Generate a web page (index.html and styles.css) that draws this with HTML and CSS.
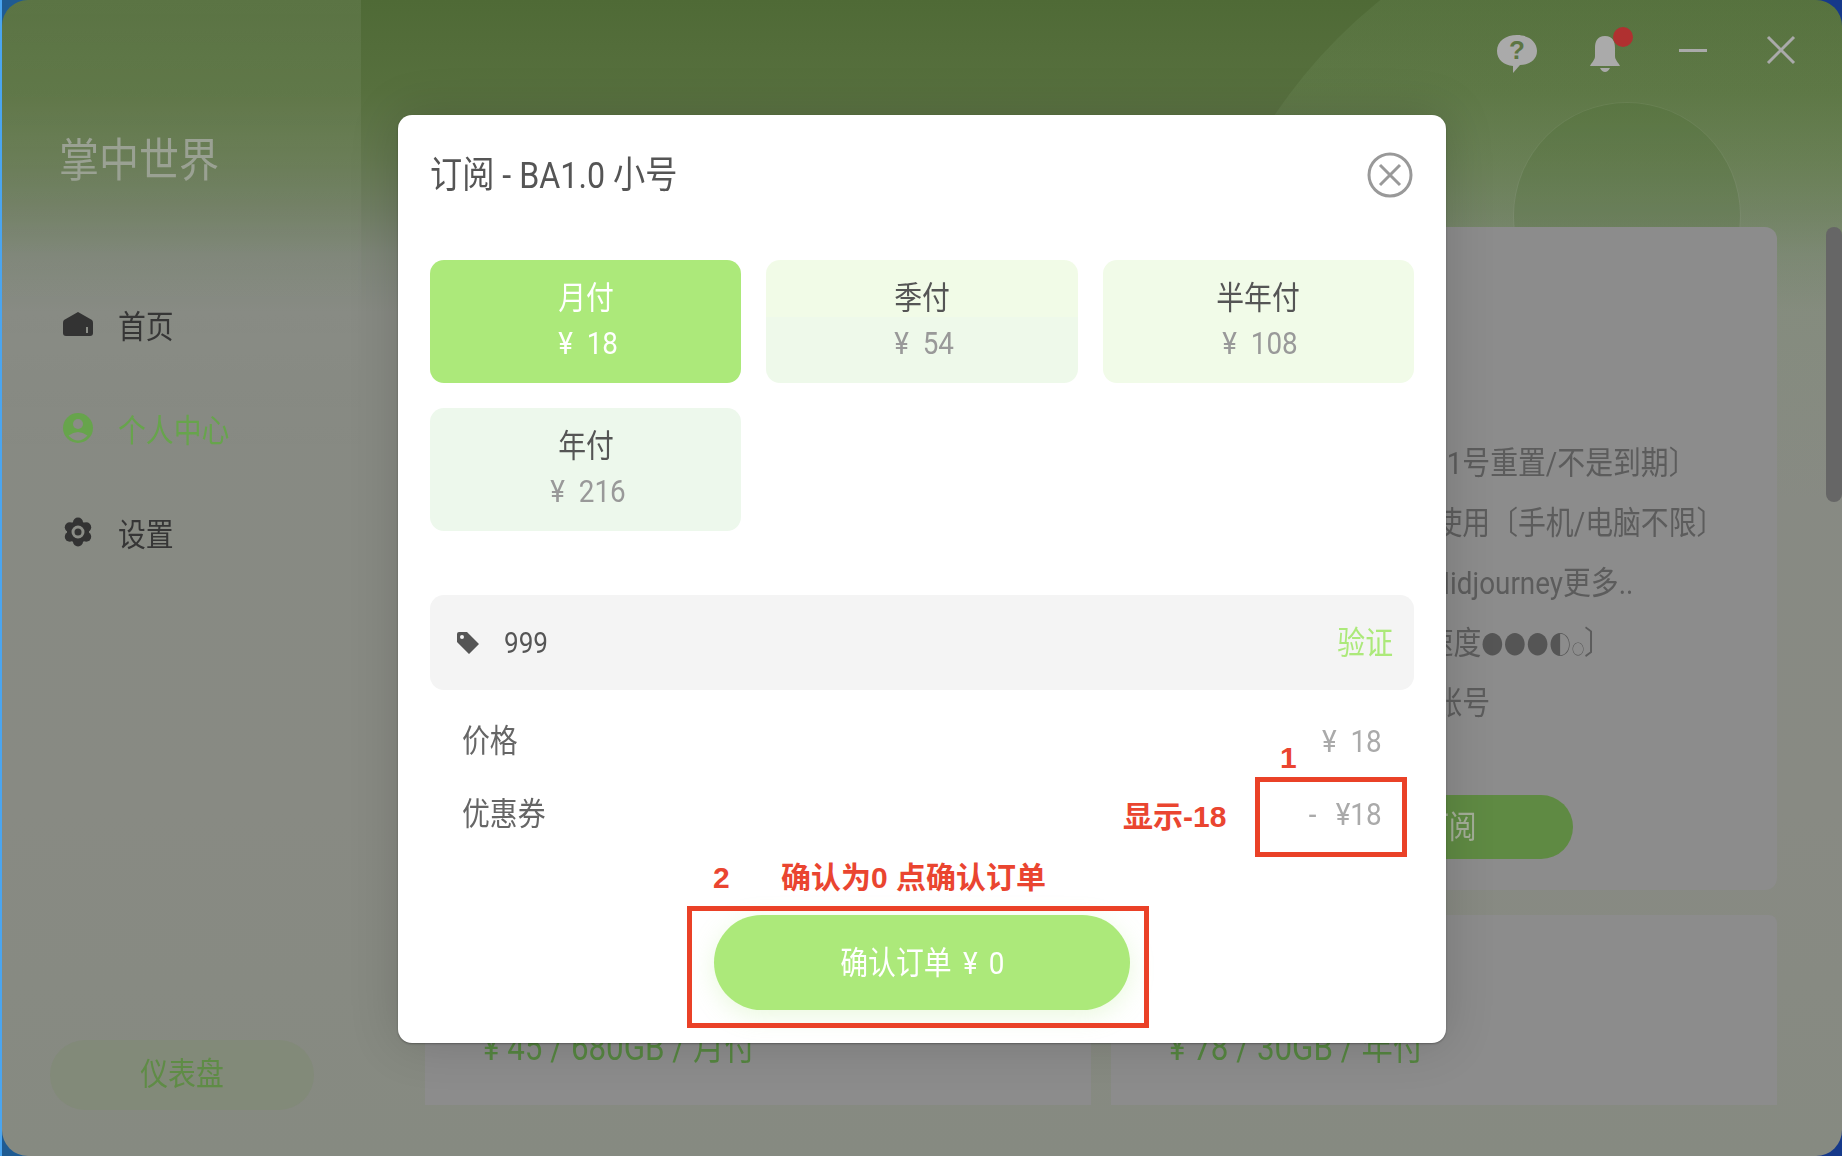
FILE: index.html
```html
<!DOCTYPE html>
<html lang="zh-CN">
<head>
<meta charset="utf-8">
<title>掌中世界</title>
<link rel="stylesheet" href="styles.css">
</head>
<body>
<div class="desk">
  <div class="window">
    <div class="deco deco-large"></div>
    <div class="deco deco-small"></div>

    <aside class="sidebar">
      <div class="logo"><span class="sq">掌中世界</span></div>
      <nav class="nav">
        <a class="nav-item">
          <svg class="nav-icon" viewBox="0 0 30 24"><path d="M15 0 29 8Q30 9 30 11V21Q30 24 27 24H3Q0 24 0 21V11Q0 9 1 8Z" fill="#333"/><rect x="23" y="15" width="2" height="6" fill="#8a8c86"/></svg>
          <span class="sq">首页</span>
        </a>
        <a class="nav-item active">
          <svg class="nav-icon" viewBox="0 0 30 30"><circle cx="15" cy="15" r="15" fill="#67a44c"/><circle cx="15" cy="11" r="5" fill="#8a8c86"/><path d="M5.5 22.5Q15 15.500 24.500 22.500 20 27.500 15 27.500T5.500 22.500Z" fill="#8a8c86"/></svg>
          <span class="sq">个人中心</span>
        </a>
        <a class="nav-item">
          <svg class="nav-icon" viewBox="0 0 30 30"><g fill="#333"><circle cx="15" cy="15" r="11"/><circle cx="15" cy="5.500" r="5"/><circle cx="15" cy="24.500" r="5"/><circle cx="6.800" cy="10.200" r="5"/><circle cx="23.200" cy="10.200" r="5"/><circle cx="6.800" cy="19.800" r="5"/><circle cx="23.200" cy="19.800" r="5"/></g><circle cx="15" cy="15" r="5" fill="none" stroke="#8a8c86" stroke-width="3"/></svg>
          <span class="sq">设置</span>
        </a>
      </nav>
      <button class="dash-btn"><span class="sq">仪表盘</span></button>
    </aside>

    <main class="main">
      <header class="toolbar">
        <span class="tool tool-low">
          <svg viewBox="0 0 42 40" width="42" height="40"><path d="M21 1C32 1 41 7 41 17 41 26 33 31 24 31L17 39 17 32C8 31 1 26 1 17 1 7 10 1 21 1Z" fill="#aaa"/><text x="21" y="25" class="help-mark">?</text></svg>
        </span>
        <span class="tool tool-low">
          <svg viewBox="0 0 32 38" width="32" height="38"><path d="M16 1C8 1 6 7 6 13V21C6 25 3 27 1 31H31C29 27 26 25 26 21V13C26 7 24 1 16 1Z" fill="#aaa"/><path d="M11 33H21Q19 37 16 37T11 33Z" fill="#aaa"/></svg>
          <i class="dot"></i>
        </span>
        <span class="tool"><i class="minus"></i></span>
        <span class="tool">
          <svg viewBox="0 0 30 30" width="30" height="30"><path d="M2 2 28 28M28 2 2 28" stroke="#aaa" stroke-width="3" fill="none"/></svg>
        </span>
      </header>

      <section class="plans">
        <article class="plan plan-tall"></article>
        <article class="plan plan-tall">
          <ul class="features">
            <li class="sq-left">每月1号重置/不是到期〕</li>
            <li class="sq-left">5台使用〔手机/电脑不限〕</li>
            <li class="sq-left">可 Midjourney更多..</li>
            <li class="sq-left">〔 速度<span class="dots">●●●◐</span><span class="dots-small">○</span>〕</li>
            <li class="sq-left">1个账号</li>
          </ul>
          <button class="buy-btn"><span class="sq">立即订阅</span></button>
        </article>
        <article class="plan plan-short"><p class="plan-price sq-left">¥ 45 / 680GB / 月付</p></article>
        <article class="plan plan-short"><p class="plan-price sq-left">¥ 78 / 30GB / 年付</p></article>
      </section>
    </main>
    <div class="scroll-thumb"></div>

    <div class="modal-layer">
      <div class="modal">
        <header class="modal-head">
          <h2 class="modal-title sq-left">订阅 - BA1.0 小号</h2>
          <svg class="modal-close" viewBox="0 0 46 46" width="46" height="46"><circle cx="23" cy="23" r="21" fill="none" stroke="#999" stroke-width="3"/><path d="M13 13 33 33M33 13 13 33" stroke="#999" stroke-width="3" fill="none"/></svg>
        </header>

        <div class="periods">
          <div class="period selected"><b class="sq">月付</b><em class="sq">¥ 18</em></div>
          <div class="period banded"><b class="sq">季付</b><em class="sq">¥ 54</em></div>
          <div class="period"><b class="sq">半年付</b><em class="sq">¥ 108</em></div>
          <div class="period cool"><b class="sq">年付</b><em class="sq">¥ 216</em></div>
        </div>

        <div class="coupon">
          <svg class="tag" viewBox="0 0 24 24" width="24" height="24"><path fill-rule="evenodd" d="M1 3Q1 1 3 1H11L23 13 13 23 1 11ZM6 4A2 2 0 1 0 6 8 2 2 0 1 0 6 4Z" fill="#555"/></svg>
          <span class="coupon-code">999</span>
          <span class="coupon-verify"><span class="sq-right">验证</span></span>
        </div>

        <div class="summary">
          <div class="sum-row"><span class="sum-label sq-left">价格</span><span class="sum-val sq-right">¥ 18</span></div>
          <div class="sum-row"><span class="sum-label sq-left">优惠券</span><span class="sum-val sum-minus sq-right">- ¥18</span></div>
        </div>

        <button class="confirm"><span class="sq">确认订单 ¥ 0</span></button>

        <div class="mark mark-box-1"></div>
        <div class="mark mark-box-2"></div>
        <span class="note note-1">1</span>
        <span class="note note-show">显示-18</span>
        <span class="note note-2">2</span>
        <span class="note note-confirm">确认为0 点确认订单</span>
      </div>
    </div>
  </div>
</div>
</body>
</html>
```
FILE: styles.css
```css
* { box-sizing: border-box; }
html, body { margin: 0; height: 100%; }
body {
  width: 1842px;
  height: 1156px;
  overflow: hidden;
  font-family: Roboto, "Noto Sans CJK SC", sans-serif;
  background: linear-gradient(90deg, #1f5b92 0, #1f5b92 50%, #16398a 50%, #16398a 100%);
}
.sq { display: inline-block; transform: scaleX(.87); transform-origin: center; white-space: nowrap; }
.sq-left { transform: scaleX(.87); transform-origin: left center; white-space: nowrap; }
.sq-right { display: inline-block; transform: scaleX(.87); transform-origin: right center; white-space: nowrap; }

.desk { height: 100%; border-left: 2px solid #4aa5f0; }
.window {
  position: relative;
  display: flex;
  height: 100%;
  overflow: hidden;
  border-radius: 26px;
  background: linear-gradient(180deg, #4f6a36 0, #57703e 8%, #647850 14%, #6f7d62 18%, #7d8577 22%, #878a83 27%, #888a83 70%, #868a81 100%);
}
.deco { position: absolute; border-radius: 50%; }
.deco-large {
  left: 1186px; top: -112px;
  width: 1024px; height: 1024px;
  background: linear-gradient(180deg, rgba(120, 150, 100, .14) 0, rgba(120, 150, 100, .26) 30%, rgba(120, 150, 100, .12) 45%, rgba(120, 150, 100, 0) 60%);
}
.deco-small {
  left: 1512px; top: 103px;
  width: 226px; height: 226px;
  background: rgba(60, 100, 40, .16);
  box-shadow: 0 0 0 1px rgba(255, 255, 255, .05);
}

.sidebar {
  position: relative;
  flex: 0 0 359px;
  display: flex;
  flex-direction: column;
  padding: 0 45px 46px 48px;
  background: linear-gradient(180deg, rgba(255, 255, 255, .07) 0, rgba(255, 255, 255, .05) 12%, rgba(255, 255, 255, .02) 24%, rgba(255, 255, 255, 0) 40%);
  filter: blur(.5px);
}
.logo {
  margin-top: 133px;
  height: 54px;
  line-height: 54px;
  font-size: 46px;
  color: #9aa193;
  margin-left: 9px;
}
.logo .sq { transform-origin: left center; }
.nav { display: flex; flex-direction: column; margin-top: 85px; margin-left: 13px; }
.nav-item {
  display: flex;
  align-items: center;
  gap: 25px;
  height: 104px;
  font-size: 32px;
  color: #363636;
}
.nav-item .sq { transform-origin: left center; }
.nav-item.active { color: #67a44c; }
.nav-icon { width: 30px; height: 30px; flex: none; }
.dash-btn {
  margin-top: auto;
  height: 70px;
  width: 264px;
  padding: 0 0 8px;
  border: 0;
  border-radius: 35px;
  font: inherit;
  font-size: 32px;
  color: #5f8c46;
  background: #828a79;
}

.main { position: relative; flex: 1; display: flex; flex-direction: column; min-width: 0; }
.toolbar { display: flex; justify-content: flex-end; align-items: center; height: 100px; padding-right: 17px; flex: none; }
.tool { position: relative; display: flex; align-items: center; justify-content: center; width: 88px; height: 100px; }
.tool-low svg { margin-top: 7px; }
.help-mark { font: bold 26px "Liberation Sans", sans-serif; fill: #5d7543; text-anchor: middle; }
.dot { position: absolute; left: 52px; top: 27px; width: 20px; height: 20px; border-radius: 50%; background: #b03030; }
.minus { width: 28px; height: 3px; background: #aaa; }

.plans {
  display: grid;
  grid-template-columns: 666px 666px;
  grid-template-rows: 663px 190px;
  gap: 25px 20px;
  padding-left: 64px;
  margin-top: 127px;
  filter: blur(.5px);
}
.plan { background: #8c8c8c; border-radius: 12px; min-width: 0; overflow: hidden; }
.plan-short { border-radius: 8px 8px 0 0; }
.features {
  list-style: none;
  margin: 206px 0 0 280px;
  padding: 0;
  font-size: 32px;
  color: #5c5c5c;
}
.features li { height: 60px; line-height: 60px; }
.dots { font-size: 25px; letter-spacing: 1px; color: #555; }
.dots-small { font-size: 14px; color: #555; }
.buy-btn {
  display: block;
  width: 304px;
  height: 64px;
  margin: 62px 0 0 158px;
  padding: 0 0 6px;
  border: 0;
  border-radius: 32px;
  background: #5f8a43;
  color: #a4ae98;
  font: inherit;
  font-size: 32px;
}
.plan-price { margin: 113px 0 0 58px; font-size: 36px; line-height: 40px; color: #558540; }

.scroll-thumb { position: absolute; right: 0; top: 227px; width: 16px; height: 275px; border-radius: 8px; background: #666; }

.modal-layer { position: absolute; inset: 0 0 0 -2px; display: flex; align-items: flex-start; justify-content: center; padding-top: 115px; padding-left: 2px; }
.modal {
  position: relative;
  width: 1048px;
  height: 928px;
  padding: 0 32px;
  border-radius: 14px;
  background: #fff;
  box-shadow: 0 0 50px rgba(0, 0, 0, .16), 0 1px 2px rgba(0, 0, 0, .3);
}
.modal-head { display: flex; align-items: center; justify-content: space-between; height: 120px; padding-right: 1px; }
.modal-title { margin: -7px 0 0; font-size: 37px; font-weight: 400; color: #555; }
.periods { display: grid; grid-template-columns: repeat(3, 1fr); grid-auto-rows: 123px; gap: 25px; margin-top: 25px; }
.period {
  display: flex;
  flex-direction: column;
  align-items: center;
  justify-content: center;
  gap: 6px;
  padding-bottom: 4px;
  border-radius: 14px;
  background: #f1fbe8;
  color: #555;
}
.period b { font-size: 32px; font-weight: 400; line-height: 40px; }
.period em { padding-left: 5px; font-size: 32px; font-style: normal; word-spacing: 8px; line-height: 38px; color: #999; }
.period.selected { background: #ace97a; color: #fff; }
.period.selected em { color: #fff; }
.period.banded { background: linear-gradient(180deg, #f1fbe7 0, #f1fbe7 46%, #eef9ea 46%, #eef9ea 100%); }
.period.cool { background: #edf8ec; }

.coupon {
  display: flex;
  align-items: center;
  height: 95px;
  margin-top: 64px;
  padding: 0 21px 0 26px;
  border-radius: 14px;
  background: #f4f4f4;
}
.coupon-code { margin-left: 24px; font-size: 30px; color: #555; transform: scaleX(.87); transform-origin: left center; }
.coupon-verify { margin: -6px 0 0 auto; font-size: 32px; color: #ace97a; }

.summary { margin-top: 14px; padding: 0 32px; font-size: 32px; color: #666; }
.sum-row { display: flex; justify-content: space-between; align-items: center; height: 73px; }
.sum-label { display: inline-block; margin-top: -6px; }
.sum-val { font-size: 32px; word-spacing: 8px; color: #aaa; }
.sum-minus { word-spacing: 14px; }

.confirm {
  display: block;
  width: 416px;
  height: 95px;
  margin: 65px auto 0;
  padding: 0 0 6px;
  border: 0;
  border-radius: 48px;
  background: #ace97a;
  box-shadow: 0 6px 24px rgba(172, 233, 122, .25);
  color: #fff;
  font: inherit;
  font-size: 32px;
  word-spacing: 5px;
}

.mark { position: absolute; border: 5px solid #ea4127; }
.mark-box-1 { left: 857px; top: 662px; width: 152px; height: 80px; }
.mark-box-2 { left: 289px; top: 791px; width: 462px; height: 122px; }
.note { position: absolute; font-family: "Liberation Sans", "Noto Sans CJK SC", sans-serif; font-weight: 700; font-size: 30px; line-height: 34px; color: #ea4530; white-space: nowrap; }
.note-1 { left: 882px; top: 626px; }
.note-show { left: 725px; top: 685px; }
.note-2 { left: 315px; top: 746px; }
.note-confirm { left: 383px; top: 746px; }
```
